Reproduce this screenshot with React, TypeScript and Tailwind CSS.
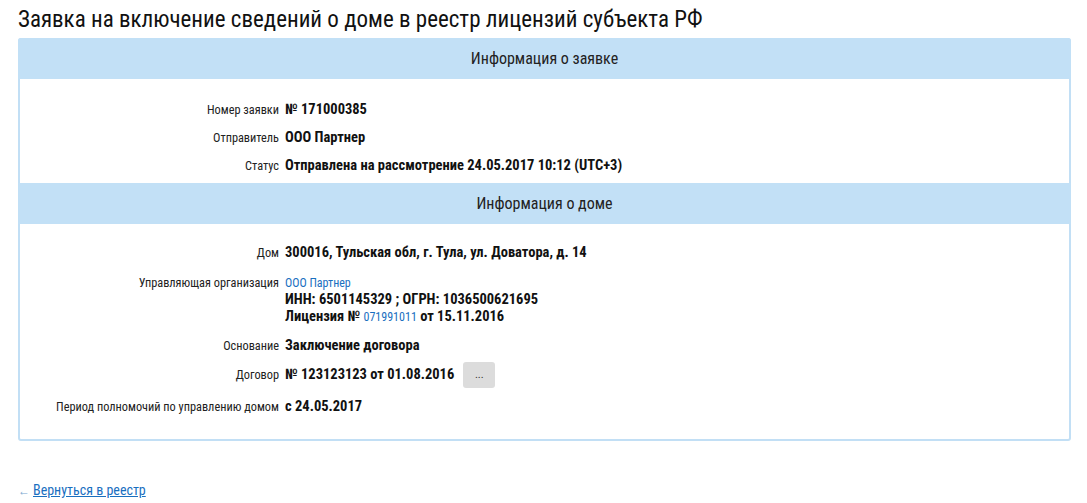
import React from 'react';

const font = "font-['Liberation_Sans_Narrow','Arial_Narrow','Roboto_Condensed',Roboto,sans-serif]";

function Row({ label, children, className = '' }: { label: string; children: React.ReactNode; className?: string }) {
  return (
    <div className={`flex items-start ${className}`}>
      <div className="w-[265px] shrink-0 pr-[6px] text-right text-[12.3px] leading-[18px] text-[#222]">{label}</div>
      <div className="text-[14.5px] leading-[18px] font-bold text-[#111]">{children}</div>
    </div>
  );
}

export default function App() {
  return (
    <div className={`min-h-screen bg-white ${font} text-[#222]`}>
      <div className="px-[18px] pt-[5px]">
        <h1 className="text-[23px] leading-[29px] text-[#111]">Заявка на включение сведений о доме в реестр лицензий субъекта РФ</h1>

        <div className="mt-[4px] w-[1053px] rounded-[3px] border-2 border-[#c2dff5] h-[403px]">
          <div className="h-[41px] bg-[#c2e0f6] flex items-center justify-center text-[16px] -mt-[2px] -mx-[2px] rounded-t-[3px]">
            Информация о заявке
          </div>
          <div className="pt-[22px] pb-[8px] flex flex-col gap-[10px]">
            <Row label="Номер заявки">№ 171000385</Row>
            <Row label="Отправитель">ООО Партнер</Row>
            <Row label="Статус">Отправлена на рассмотрение 24.05.2017 10:12 (UTC+3)</Row>
          </div>
          <div className="h-[41px] bg-[#c2e0f6] flex items-center justify-center text-[16px] -mx-[2px]">
            Информация о доме
          </div>
          <div className="pt-[20px] flex flex-col">
            <Row label="Дом">300016, Тульская обл, г. Тула, ул. Доватора, д. 14</Row>
            <div className="flex items-start mt-[13px]">
              <div className="w-[265px] shrink-0 pr-[6px] text-right text-[12.3px] leading-[16px]">Управляющая организация</div>
              <div className="text-[14.5px] leading-[17px] font-bold text-[#111]">
                <div className="text-[12px] font-normal text-[#1a6fbf] leading-[16px]">ООО Партнер</div>
                <div>ИНН: 6501145329 ; ОГРН: 1036500621695</div>
                <div>
                  Лицензия № <span className="text-[12px] font-normal text-[#1a6fbf]">071991011</span> от 15.11.2016
                </div>
              </div>
            </div>
            <Row label="Основание" className="mt-[11px]">Заключение договора</Row>
            <div className="flex items-center mt-[7px] h-[26px]">
              <div className="w-[265px] shrink-0 pr-[6px] text-right text-[12.3px] leading-[18px]">Договор</div>
              <div className="text-[14.5px] leading-[18px] font-bold text-[#111]">№ 123123123 от 01.08.2016</div>
              <button className="ml-[9px] w-[32px] h-[26px] rounded-[3px] bg-[#dcdcdc] text-[11px] leading-[14px] text-[#333]">...</button>
            </div>
            <Row label="Период полномочий по управлению домом" className="mt-[10px]">с 24.05.2017</Row>
          </div>
        </div>

        <div className="mt-[41px] text-[14px] leading-[16px]">
          <span className="text-[#7aa7cf] text-[12px] mr-[3px]">←</span>
          <a href="#" className="text-[#1a6fbf] underline">Вернуться в реестр</a>
        </div>
      </div>
    </div>
  );
}
